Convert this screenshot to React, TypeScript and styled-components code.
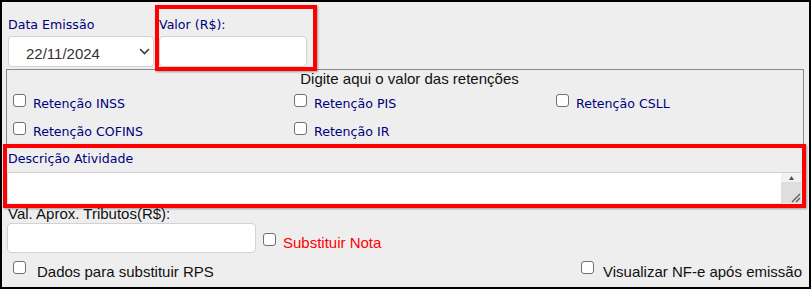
import styled, { createGlobalStyle } from "styled-components";

const GlobalStyle = createGlobalStyle`
  body {
    margin: 0;
    background: #ffffff;
  }
  * {
    box-sizing: border-box;
  }
`;

const retencoes = [
  ["Retenção INSS", "Retenção PIS", "Retenção CSLL"],
  ["Retenção COFINS", "Retenção IR"],
];

export default function App() {
  return (
    <>
      <GlobalStyle />
      <Frame>
        <TopRow>
          <Field>
            <NavyLabel>Data Emissão</NavyLabel>
            <SelectBox>
              <span>22/11/2024</span>
              <svg width="11" height="7" viewBox="0 0 11 7">
                <path d="M1 1 L5.5 5.5 L10 1" fill="none" stroke="#3c3c3c" strokeWidth="1.6" />
              </svg>
            </SelectBox>
          </Field>
          <Field>
            <NavyLabel>Valor (R$):</NavyLabel>
            <TextInput $width={148} $height={31} />
          </Field>
        </TopRow>

        <Retencoes>
          <RetTitle>Digite aqui o valor das retenções</RetTitle>
          <RetGrid>
            {retencoes.flat().map((name) => (
              <CheckItem key={name}>
                <Check type="checkbox" />
                <NavyLabel>{name}</NavyLabel>
              </CheckItem>
            ))}
          </RetGrid>
        </Retencoes>

        <DescLabel>Descrição Atividade</DescLabel>
        <TextareaWrap>
          <Textarea />
          <ScrollCol>
            <ScrollTop>
              <svg width="5" height="4" viewBox="0 0 5 4">
                <path d="M0 4 L2.5 0 L5 4 Z" fill="#505050" />
              </svg>
            </ScrollTop>
            <ScrollTrack>
              <svg width="11" height="11" viewBox="0 0 11 11">
                <path d="M10 2 L2 10 M10 6 L6 10" stroke="#5a5a5a" strokeWidth="1.3" />
              </svg>
            </ScrollTrack>
          </ScrollCol>
        </TextareaWrap>

        <BlackLabel $left={6} $top={2}>Val. Aprox. Tributos(R$):</BlackLabel>
        <TributosRow>
          <TextInput $width={249} $height={30} />
          <Check type="checkbox" $top={10} />
          <RedLabel>Substituir Nota</RedLabel>
        </TributosRow>

        <BottomRow>
          <CheckItem $gap={11}>
            <Check type="checkbox" />
            <BlackText>Dados para substituir RPS</BlackText>
          </CheckItem>
          <CheckItem $gap={9}>
            <Check type="checkbox" />
            <BlackText>Visualizar NF-e após emissão</BlackText>
          </CheckItem>
        </BottomRow>

        <Highlight $left={153} $top={3} $width={162} $height={66} />
        <Highlight $left={1} $top={142} $width={803} $height={64} />
      </Frame>
    </>
  );
}

const Frame = styled.div`
  position: relative;
  width: 811px;
  height: 289px;
  border: 2px solid #000000;
  background: #eeeeee;
  display: flex;
  flex-direction: column;
  font-family: "Liberation Sans", Arial, sans-serif;
`;

const TopRow = styled.div`
  display: flex;
  gap: 5px;
  padding: 15px 0 0 6px;
`;

const Field = styled.div`
  display: flex;
  flex-direction: column;
  gap: 4px;
`;

const NavyLabel = styled.span`
  font-family: "DejaVu Sans", Verdana, sans-serif;
  font-size: 12.6px;
  line-height: 15px;
  color: #00007c;
  white-space: nowrap;
`;

const SelectBox = styled.div`
  width: 146px;
  height: 31px;
  background: #ffffff;
  border: 1px solid #d2d2d2;
  border-radius: 4px;
  display: flex;
  align-items: center;
  justify-content: space-between;
  padding: 3px 3px 0 17px;
  font-size: 15px;
  line-height: 17px;
  color: #333333;

  svg {
    margin-top: -3px;
  }
`;

const TextInput = styled.div<{ $width: number; $height: number }>`
  width: ${(p) => p.$width}px;
  height: ${(p) => p.$height}px;
  background: #ffffff;
  border: 1px solid #d2d2d2;
  border-radius: 4px;
`;

const Retencoes = styled.div`
  margin: 2px 0 0 4px;
  width: 798px;
  height: 78px;
  border: 1px solid #8a8a8a;
  display: flex;
  flex-direction: column;
`;

const RetTitle = styled.div`
  text-align: center;
  font-size: 15px;
  line-height: 17px;
  color: #111111;
  padding-left: 9px;
`;

const RetGrid = styled.div`
  display: grid;
  grid-template-columns: 281px 262px 1fr;
  row-gap: 11px;
  margin-top: 7px;
  padding-left: 6px;
`;

const CheckItem = styled.label<{ $gap?: number }>`
  display: flex;
  align-items: flex-start;
  gap: ${(p) => p.$gap ?? 7}px;

  span {
    margin-top: 2px;
  }
`;

const Check = styled.input<{ $top?: number }>`
  appearance: none;
  width: 13px;
  height: 13px;
  margin: ${(p) => p.$top ?? 0}px 0 0 0;
  border: 1px solid #707070;
  border-radius: 3px;
  background: #ffffff;
  flex-shrink: 0;
`;

const DescLabel = styled(NavyLabel)`
  margin: 4px 0 0 6px;
`;

const TextareaWrap = styled.div`
  display: flex;
  margin: 6px 0 0 5px;
  width: 794px;
  height: 31px;
  background: #ffffff;
  border-top: 1px solid #cfcfcf;
  border-left: 1px solid #e2e2e2;
`;

const Textarea = styled.textarea`
  flex: 1;
  border: none;
  outline: none;
  resize: none;
  background: transparent;
`;

const ScrollCol = styled.div`
  width: 20px;
  display: flex;
  flex-direction: column;
`;

const ScrollTop = styled.div`
  height: 9px;
  background: #f2f2f2;
  display: flex;
  align-items: center;
  justify-content: center;
`;

const ScrollTrack = styled.div`
  flex: 1;
  background: #dedede;
  display: flex;
  align-items: flex-end;
  justify-content: flex-end;
`;

const BlackLabel = styled.div<{ $left: number; $top: number }>`
  margin: ${(p) => p.$top}px 0 0 ${(p) => p.$left}px;
  font-size: 15px;
  line-height: 17px;
  color: #111111;
`;

const TributosRow = styled.div`
  display: flex;
  align-items: flex-start;
  gap: 7px;
  margin: 1px 0 0 5px;
`;

const RedLabel = styled.span`
  margin-top: 11px;
  margin-left: 0;
  font-size: 15px;
  line-height: 17px;
  color: #ff0000;
`;

const BottomRow = styled.div`
  display: flex;
  justify-content: space-between;
  margin-top: 8px;
  padding: 0 7px 0 11px;
`;

const BlackText = styled.span`
  font-size: 15px;
  line-height: 17px;
  color: #111111;
  white-space: nowrap;
`;

const Highlight = styled.div<{ $left: number; $top: number; $width: number; $height: number }>`
  position: absolute;
  left: ${(p) => p.$left}px;
  top: ${(p) => p.$top}px;
  width: ${(p) => p.$width}px;
  height: ${(p) => p.$height}px;
  border: 4px solid #ff0000;
  box-shadow: 1px 1px 2px rgba(0, 0, 0, 0.35);
  pointer-events: none;
`;
